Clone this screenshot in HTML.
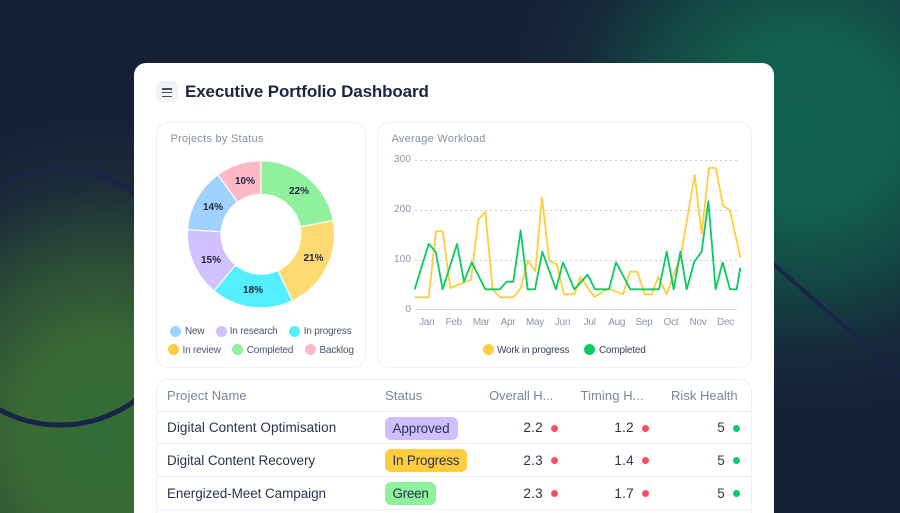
<!DOCTYPE html>
<html><head><meta charset="utf-8"><title>Executive Portfolio Dashboard</title>
<style>
html,body{margin:0;padding:0;width:900px;height:513px;overflow:hidden}
body{background:#162138;font-family:"Liberation Sans",sans-serif;position:relative}
.wrap{position:absolute;left:0;top:0;width:900px;height:513px;overflow:hidden;background:#162138}
.bg{position:absolute;inset:0;background:
radial-gradient(ellipse 285px 315px at 105px 435px,rgba(50,110,54,.97) 0%,rgba(60,112,52,.94) 28%,rgba(52,95,54,.72) 55%,rgba(34,60,58,.4) 80%,rgba(22,33,56,0) 100%),
radial-gradient(ellipse 295px 285px at 805px 125px,rgba(18,98,84,1) 0%,rgba(18,97,80,.97) 30%,rgba(19,84,72,.74) 55%,rgba(21,58,62,.34) 80%,rgba(22,33,56,0) 100%)}
svg.deco{position:absolute;left:0;top:0}
.card{position:absolute;left:134px;top:63px;width:640px;height:450px;background:#fff;border-radius:12px 12px 0 0}
.a{position:absolute;white-space:nowrap;line-height:16px}
.panel{position:absolute;box-sizing:border-box;background:#fff;border:1px solid #eef0f7;border-radius:12px}
.btn{position:absolute;left:156px;top:81px;width:22px;height:22px;border-radius:6px;background:#f2f3f7}
.btn i{position:absolute;left:6.3px;width:9.5px;height:1.6px;background:#4a4f60}
.t{font-size:11px;color:#878fa9;letter-spacing:.25px}
.l{font-size:10px;color:#4c5370;letter-spacing:-.2px}
.ax{font-size:10px;color:#8d95ae;letter-spacing:.1px}
.m{letter-spacing:-.3px}
.p{font-size:10px;font-weight:bold;color:#1f2740;transform:translate(-50%,-50%)}
.d{position:absolute;border-radius:50%}
.h{font-size:13px;color:#7b84a1;letter-spacing:.08px}
.n{font-size:13.5px;color:#2c3350}
.b{position:absolute;left:385px;height:23px;border-radius:6px;font-size:13.5px;line-height:23px;color:#2c3350;padding-left:7.5px;box-sizing:border-box}
.v{font-size:13.5px;color:#2c3350;letter-spacing:.3px;text-align:right;width:40px}
.row{position:absolute;left:157px;width:594px;height:1px;background:#eef0f7}
</style></head><body><div class="wrap">
<div class="bg"></div>
<svg class="deco" width="900" height="513"><circle cx="60" cy="297" r="128" fill="none" stroke="#1a2446" stroke-width="5"/><line x1="770" y1="261" x2="900" y2="375" stroke="#1a2446" stroke-width="4"/></svg>
<div class="card"></div>
<div class="btn"><i style="top:7px"></i><i style="top:10.7px"></i><i style="top:14.5px"></i></div>
<div class="a" style="left:185px;top:83px;font-size:17px;line-height:18px;font-weight:bold;color:#1d2540;letter-spacing:-.13px">Executive Portfolio Dashboard</div>

<div class="panel" style="left:156px;top:122px;width:210px;height:246px"></div>
<div class="panel" style="left:377px;top:122px;width:375px;height:246px"></div>
<div class="a t" style="left:170.5px;top:131px">Projects by Status</div>
<div class="a t" style="left:391.5px;top:131px">Average Workload</div>

<svg style="position:absolute;left:0;top:0" width="900" height="513">
<g fill="none" stroke-width="32.5" transform="rotate(-90 261 234.3)">
<circle cx="261" cy="234.3" r="56.75" stroke="#8ff19b" stroke-dasharray="78.45 356.57"/>
<circle cx="261" cy="234.3" r="56.75" stroke="#ffd972" stroke-dasharray="74.88 356.57" stroke-dashoffset="-78.45"/>
<circle cx="261" cy="234.3" r="56.75" stroke="#54efff" stroke-dasharray="64.18 356.57" stroke-dashoffset="-153.33"/>
<circle cx="261" cy="234.3" r="56.75" stroke="#d2c1ff" stroke-dasharray="53.49 356.57" stroke-dashoffset="-217.51"/>
<circle cx="261" cy="234.3" r="56.75" stroke="#9fd2ff" stroke-dasharray="49.92 356.57" stroke-dashoffset="-271"/>
<circle cx="261" cy="234.3" r="56.75" stroke="#ffb8c6" stroke-dasharray="35.66 356.57" stroke-dashoffset="-320.92"/>
</g>
<g stroke="#fff" stroke-width="1.2">
<line x1="261" y1="160" x2="261" y2="195"/>
<line x1="261" y1="160" x2="261" y2="195" transform="rotate(79.2 261 234.3)"/>
<line x1="261" y1="160" x2="261" y2="195" transform="rotate(154.8 261 234.3)"/>
<line x1="261" y1="160" x2="261" y2="195" transform="rotate(219.6 261 234.3)"/>
<line x1="261" y1="160" x2="261" y2="195" transform="rotate(273.6 261 234.3)"/>
<line x1="261" y1="160" x2="261" y2="195" transform="rotate(324 261 234.3)"/>
</g>
<g stroke="#c9cbd3" stroke-width="1" stroke-dasharray="2 3">
<line x1="415" y1="160.5" x2="737" y2="160.5"/>
<line x1="415" y1="210.5" x2="737" y2="210.5"/>
<line x1="415" y1="260.5" x2="737" y2="260.5"/>
</g>
<line x1="415" y1="309.5" x2="737" y2="309.5" stroke="#d5d8ea" stroke-width="1"/>
<g transform="translate(380 125) scale(.33333)" fill="none" stroke-width="5.5" stroke-linejoin="round">
<polyline stroke="#ffcd3f" points="104,517 146,517 168,319 188,319 211,489 273,464 295,283 316,261 338,493 360,517 400,517 422,490 443,407 466,438 486,217 508,407 530,417 552,508 583,508 601,456 643,516 685,490 729,508 750,440 772,440 794,508 815,508 835,456 860,508 903,390 944,150 965,327 987,129 1007,129 1029,242 1050,256 1081,397"/>
<polyline stroke="#0dcb63" points="104,493 146,357 167,380 188,493 231,357 252,470 275,412 316,493 360,493 380,470 400,470 422,316 443,493 465,493 487,380 528,493 549,412 583,493 623,449 645,493 687,493 708,412 751,493 837,493 860,380 881,493 901,380 920,493 943,410 965,380 985,229 1007,493 1028,412 1050,493 1070,493 1081,428"/>
</g>
</svg>

<div class="a p" style="left:299px;top:191.7px">22%</div>
<div class="a p" style="left:313.5px;top:259px">21%</div>
<div class="a p" style="left:253px;top:291px">18%</div>
<div class="a p" style="left:211px;top:261px">15%</div>
<div class="a p" style="left:213px;top:208px">14%</div>
<div class="a p" style="left:245px;top:182px">10%</div>

<div class="d" style="left:170px;top:325.5px;width:11px;height:11px;background:#9fd2ff"></div><div class="a l" style="left:185px;top:324px">New</div>
<div class="d" style="left:215.5px;top:325.5px;width:11px;height:11px;background:#d2c1ff"></div><div class="a l" style="left:229.7px;top:324px">In research</div>
<div class="d" style="left:289px;top:325.5px;width:11px;height:11px;background:#54efff"></div><div class="a l" style="left:303.7px;top:324px">In progress</div>
<div class="d" style="left:168px;top:344px;width:11px;height:11px;background:#ffcd3f"></div><div class="a l" style="left:182.5px;top:342.5px">In review</div>
<div class="d" style="left:232px;top:344px;width:11px;height:11px;background:#8ff19b"></div><div class="a l" style="left:246.7px;top:342.5px">Completed</div>
<div class="d" style="left:304.7px;top:344px;width:11px;height:11px;background:#ffb8c6"></div><div class="a l" style="left:319.5px;top:342.5px">Backlog</div>

<div class="a ax" style="left:381px;width:30px;text-align:right;top:152px">300</div>
<div class="a ax" style="left:381px;width:30px;text-align:right;top:202px">200</div>
<div class="a ax" style="left:381px;width:30px;text-align:right;top:251.5px">100</div>
<div class="a ax" style="left:381px;width:30px;text-align:right;top:301.5px">0</div>
<div class="a ax m" style="left:406.7px;width:40px;text-align:center;top:315px">Jan</div>
<div class="a ax m" style="left:433.7px;width:40px;text-align:center;top:315px">Feb</div>
<div class="a ax m" style="left:461px;width:40px;text-align:center;top:315px">Mar</div>
<div class="a ax m" style="left:488px;width:40px;text-align:center;top:315px">Apr</div>
<div class="a ax m" style="left:515px;width:40px;text-align:center;top:315px">May</div>
<div class="a ax m" style="left:542.5px;width:40px;text-align:center;top:315px">Jun</div>
<div class="a ax m" style="left:569.7px;width:40px;text-align:center;top:315px">Jul</div>
<div class="a ax m" style="left:596.7px;width:40px;text-align:center;top:315px">Aug</div>
<div class="a ax m" style="left:624px;width:40px;text-align:center;top:315px">Sep</div>
<div class="a ax m" style="left:651px;width:40px;text-align:center;top:315px">Oct</div>
<div class="a ax m" style="left:678px;width:40px;text-align:center;top:315px">Nov</div>
<div class="a ax m" style="left:705.5px;width:40px;text-align:center;top:315px">Dec</div>
<div class="d" style="left:482.5px;top:344px;width:11px;height:11px;background:#ffcd3f"></div><div class="a l" style="left:497px;top:342.5px;color:#3a415c">Work in progress</div>
<div class="d" style="left:584px;top:344px;width:11px;height:11px;background:#0dcb63"></div><div class="a l" style="left:599px;top:342.5px;color:#3a415c">Completed</div>

<div class="panel" style="left:156px;top:379px;width:596px;height:134px;border-bottom:0;border-radius:12px 12px 0 0"></div>
<div class="row" style="top:411px"></div><div class="row" style="top:443px"></div><div class="row" style="top:476px"></div><div class="row" style="top:509px"></div>
<div class="a h" style="left:167px;top:388px">Project Name</div>
<div class="a h" style="left:385px;top:388px">Status</div>
<div class="a h" style="left:489px;top:388px;letter-spacing:-.07px">Overall H...</div>
<div class="a h" style="left:580.5px;top:388px">Timing H...</div>
<div class="a h" style="left:671px;top:388px;letter-spacing:.02px">Risk Health</div>

<div class="a n" style="left:167px;top:420px;letter-spacing:.07px">Digital Content Optimisation</div>
<div class="a n" style="left:167px;top:453px;letter-spacing:-.05px">Digital Content Recovery</div>
<div class="a n" style="left:167px;top:485.5px;letter-spacing:-.07px">Energized-Meet Campaign</div>
<div class="b" style="top:416.5px;width:73px;background:#d0bfff;letter-spacing:-.1px">Approved</div>
<div class="b" style="top:449px;width:82px;background:#ffcd3f;letter-spacing:-.2px">In Progress</div>
<div class="b" style="top:482px;width:51px;background:#8ff19b;letter-spacing:-.3px">Green</div>

<div class="a v" style="left:503px;top:420px">2.2</div><div class="d" style="left:551px;top:424.5px;width:7px;height:7px;background:#fb4d63"></div>
<div class="a v" style="left:594px;top:420px">1.2</div><div class="d" style="left:642px;top:424.5px;width:7px;height:7px;background:#fb4d63"></div>
<div class="a v" style="left:685px;top:420px">5</div><div class="d" style="left:733px;top:424.5px;width:7px;height:7px;background:#0dcb63"></div>
<div class="a v" style="left:503px;top:453px">2.3</div><div class="d" style="left:551px;top:457px;width:7px;height:7px;background:#fb4d63"></div>
<div class="a v" style="left:594px;top:453px">1.4</div><div class="d" style="left:642px;top:457px;width:7px;height:7px;background:#fb4d63"></div>
<div class="a v" style="left:685px;top:453px">5</div><div class="d" style="left:733px;top:457px;width:7px;height:7px;background:#0dcb63"></div>
<div class="a v" style="left:503px;top:485.5px">2.3</div><div class="d" style="left:551px;top:490px;width:7px;height:7px;background:#fb4d63"></div>
<div class="a v" style="left:594px;top:485.5px">1.7</div><div class="d" style="left:642px;top:490px;width:7px;height:7px;background:#fb4d63"></div>
<div class="a v" style="left:685px;top:485.5px">5</div><div class="d" style="left:733px;top:490px;width:7px;height:7px;background:#0dcb63"></div>
</div></body></html>
